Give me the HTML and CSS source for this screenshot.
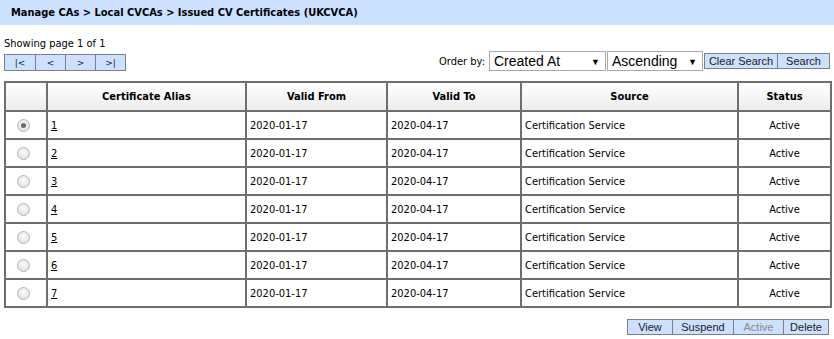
FILE: index.html
```html
<!DOCTYPE html>
<html lang="en">
  <head>
    <meta charset="UTF-8" />
    <title>Issued CV Certificates</title>
    <link rel="stylesheet" href="styles.css">
  </head>
  <body>
    <div class="title-bar">Manage CAs &gt; Local CVCAs &gt; Issued CV Certificates (UKCVCA)</div>

    <div class="toolbar">
      <div class="paging">
        <div class="page-info">Showing page 1 of 1</div>
        <div class="pager">
          <button class="btn pager-btn">|&lt;</button>
          <button class="btn pager-btn">&lt;</button>
          <button class="btn pager-btn">&gt;</button>
          <button class="btn pager-btn">&gt;|</button>
        </div>
      </div>
      <div class="order">
        <span class="order-label">Order by:</span>
        <div class="select select-field">Created At<span class="arrow">&#9660;</span></div>
        <div class="select select-dir">Ascending<span class="arrow">&#9660;</span></div>
        <div class="btn-group">
          <button class="btn btn-clear">Clear Search</button>
          <button class="btn btn-search">Search</button>
        </div>
      </div>
    </div>

    <table class="cert-table">
      <colgroup>
        <col class="col-radio">
        <col class="col-alias">
        <col class="col-from">
        <col class="col-to">
        <col class="col-source">
        <col class="col-status">
      </colgroup>
      <thead>
        <tr>
          <th></th>
          <th>Certificate Alias</th>
          <th>Valid From</th>
          <th>Valid To</th>
          <th>Source</th>
          <th>Status</th>
        </tr>
      </thead>
      <tbody>
        <tr>
          <td class="cell-radio"><span class="radio checked"></span></td>
          <td><a href="#">1</a></td>
          <td>2020-01-17</td>
          <td>2020-04-17</td>
          <td>Certification Service</td>
          <td class="cell-status">Active</td>
        </tr>
        <tr>
          <td class="cell-radio"><span class="radio"></span></td>
          <td><a href="#">2</a></td>
          <td>2020-01-17</td>
          <td>2020-04-17</td>
          <td>Certification Service</td>
          <td class="cell-status">Active</td>
        </tr>
        <tr>
          <td class="cell-radio"><span class="radio"></span></td>
          <td><a href="#">3</a></td>
          <td>2020-01-17</td>
          <td>2020-04-17</td>
          <td>Certification Service</td>
          <td class="cell-status">Active</td>
        </tr>
        <tr>
          <td class="cell-radio"><span class="radio"></span></td>
          <td><a href="#">4</a></td>
          <td>2020-01-17</td>
          <td>2020-04-17</td>
          <td>Certification Service</td>
          <td class="cell-status">Active</td>
        </tr>
        <tr>
          <td class="cell-radio"><span class="radio"></span></td>
          <td><a href="#">5</a></td>
          <td>2020-01-17</td>
          <td>2020-04-17</td>
          <td>Certification Service</td>
          <td class="cell-status">Active</td>
        </tr>
        <tr>
          <td class="cell-radio"><span class="radio"></span></td>
          <td><a href="#">6</a></td>
          <td>2020-01-17</td>
          <td>2020-04-17</td>
          <td>Certification Service</td>
          <td class="cell-status">Active</td>
        </tr>
        <tr>
          <td class="cell-radio"><span class="radio"></span></td>
          <td><a href="#">7</a></td>
          <td>2020-01-17</td>
          <td>2020-04-17</td>
          <td>Certification Service</td>
          <td class="cell-status">Active</td>
        </tr>
      </tbody>
    </table>

    <div class="actions">
      <div class="btn-group">
        <button class="btn btn-view">View</button>
        <button class="btn btn-suspend">Suspend</button>
        <button class="btn btn-active disabled">Active</button>
        <button class="btn btn-delete">Delete</button>
      </div>
    </div>
  </body>
</html>
```

FILE: styles.css
```css
:root {
  --bar-bg: #cce0ff;
  --btn-bg: #cce0ff;
  --btn-border: #808080;
  --grid-line: #6e6e6e;
  --text: #000;
}
html,
body {
  margin: 0;
  padding: 0;
  background: #fff;
  color: var(--text);
  font-family: "DejaVu Sans", Tahoma, sans-serif;
  font-stretch: condensed;
  font-size: 11px;
}

.title-bar {
  height: 25px;
  line-height: 26px;
  padding-left: 11px;
  background: var(--bar-bg);
  font-weight: bold;
  font-size: 11px;
}

.toolbar {
  display: flex;
  justify-content: space-between;
  align-items: flex-end;
  padding: 12px 4px 0 4px;
}
.page-info {
  line-height: 14px;
  margin-bottom: 3px;
}
.pager {
  display: flex;
}

.btn {
  height: 16px;
  margin: 0;
  padding: 0;
  background: var(--btn-bg);
  border: 1px solid var(--btn-border);
  font-family: "Liberation Sans", Arial, sans-serif;
  font-size: 11px;
  color: #222;
  line-height: 14px;
  cursor: pointer;
}
.btn + .btn {
  margin-left: -1px;
}
.btn.disabled {
  color: #8a8a8a;
}
.pager-btn {
  width: 32px;
  height: 17px;
  font-family: "DejaVu Sans", Tahoma, sans-serif;
  font-size: 9px;
}
.pager-btn + .pager-btn {
  width: 31px;
}
.btn-group {
  display: flex;
}

.order {
  display: flex;
  align-items: center;
}
.order-label {
  margin-right: 4px;
}
.select {
  position: relative;
  box-sizing: border-box;
  height: 20px;
  border: 1px solid #a9a9a9;
  padding-left: 4px;
  font-family: "Liberation Sans", Arial, sans-serif;
  font-stretch: normal;
  font-size: 14px;
  line-height: 18px;
  background: #fff;
}
.select-field {
  width: 117px;
}
.select-dir {
  width: 96px;
  margin-left: 1px;
  margin-right: 1px;
}
.select .arrow {
  position: absolute;
  right: 5px;
  top: 1px;
  font-size: 9px;
}
.btn-clear { width: 74px; }
.btn-search { width: 53px; }

.cert-table {
  margin: 10px 4px 0 4px;
  width: 826px;
  table-layout: fixed;
  border-collapse: collapse;
  border: 2px solid #8a8a8a;
}
.cert-table th,
.cert-table td {
  border: 2px solid var(--grid-line);
  height: 26px;
  padding: 0 3px;
  text-align: left;
}
.cert-table th {
  height: 27px;
  text-align: center;
  font-weight: bold;
  font-size: 11px;
  background: linear-gradient(#ffffff, #ececec);
}
.cert-table a {
  color: #000;
}
.col-radio { width: 42px; }
.col-alias { width: 199px; }
.col-from { width: 141px; }
.col-to { width: 134px; }
.col-source { width: 217px; }
.col-status { width: 93px; }
.cert-table td.cell-radio {
  padding-left: 11px;
}
.cert-table td.cell-status {
  text-align: center;
}

.radio {
  display: inline-block;
  box-sizing: border-box;
  width: 13px;
  height: 13px;
  border-radius: 50%;
  border: 1px solid #b5b5b5;
  background: radial-gradient(circle at 50% 40%, #fafafa, #dcdcdc);
  vertical-align: middle;
  position: relative;
}
.radio.checked::after {
  content: "";
  position: absolute;
  left: 3px;
  top: 3px;
  width: 5px;
  height: 5px;
  border-radius: 50%;
  background: #6a6a6a;
}

.actions {
  display: flex;
  justify-content: flex-end;
  padding: 11px 5px 0 0;
}
.btn-view { width: 46px; }
.btn-suspend { width: 62px; }
.btn-active { width: 51px; }
.btn-delete { width: 46px; }
```
